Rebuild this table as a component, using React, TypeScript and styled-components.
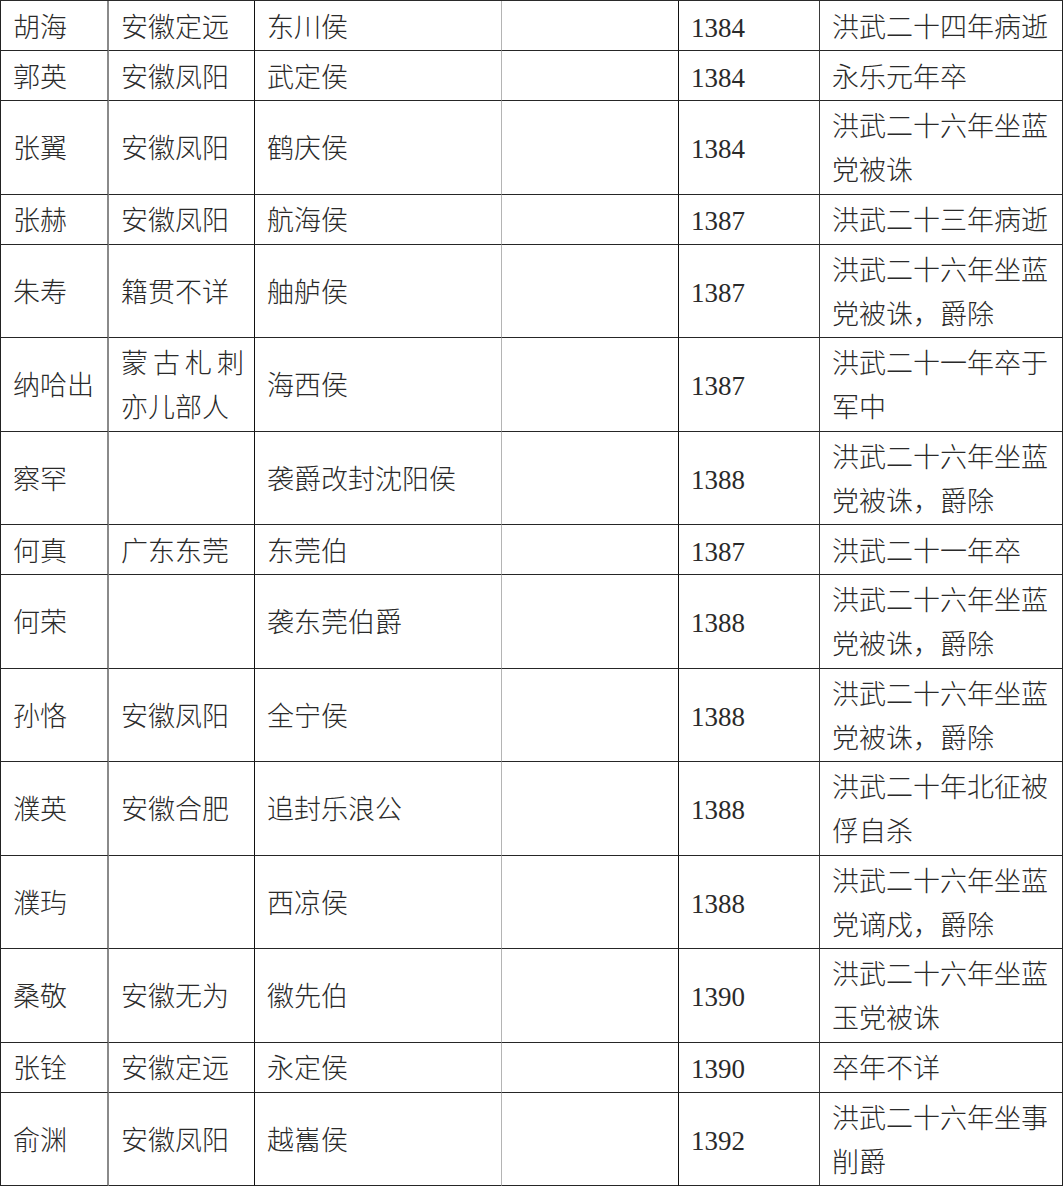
import React from "react";
import styled, { createGlobalStyle } from "styled-components";

const GlobalStyle = createGlobalStyle`
  html, body {
    margin: 0;
    padding: 0;
    background: #ffffff;
  }
  body {
    font-family: "Liberation Serif", "Noto Sans CJK SC", serif;
    color: #2a2a2a;
  }
`;

type Marquis = {
  name: string;
  origin: string;
  title: string;
  year: string;
  fate: string;
  tall?: boolean;
};

const rows: Marquis[] = [
  { name: "胡海", origin: "安徽定远", title: "东川侯", year: "1384", fate: "洪武二十四年病逝" },
  { name: "郭英", origin: "安徽凤阳", title: "武定侯", year: "1384", fate: "永乐元年卒" },
  { name: "张翼", origin: "安徽凤阳", title: "鹤庆侯", year: "1384", fate: "洪武二十六年坐蓝党被诛", tall: true },
  { name: "张赫", origin: "安徽凤阳", title: "航海侯", year: "1387", fate: "洪武二十三年病逝" },
  { name: "朱寿", origin: "籍贯不详", title: "舳舻侯", year: "1387", fate: "洪武二十六年坐蓝党被诛，爵除", tall: true },
  { name: "纳哈出", origin: "蒙古札刺亦儿部人", title: "海西侯", year: "1387", fate: "洪武二十一年卒于军中", tall: true },
  { name: "察罕", origin: "", title: "袭爵改封沈阳侯", year: "1388", fate: "洪武二十六年坐蓝党被诛，爵除", tall: true },
  { name: "何真", origin: "广东东莞", title: "东莞伯", year: "1387", fate: "洪武二十一年卒" },
  { name: "何荣", origin: "", title: "袭东莞伯爵", year: "1388", fate: "洪武二十六年坐蓝党被诛，爵除", tall: true },
  { name: "孙恪", origin: "安徽凤阳", title: "全宁侯", year: "1388", fate: "洪武二十六年坐蓝党被诛，爵除", tall: true },
  { name: "濮英", origin: "安徽合肥", title: "追封乐浪公", year: "1388", fate: "洪武二十年北征被俘自杀", tall: true },
  { name: "濮玙", origin: "", title: "西凉侯", year: "1388", fate: "洪武二十六年坐蓝党谪戍，爵除", tall: true },
  { name: "桑敬", origin: "安徽无为", title: "徽先伯", year: "1390", fate: "洪武二十六年坐蓝玉党被诛", tall: true },
  { name: "张铨", origin: "安徽定远", title: "永定侯", year: "1390", fate: "卒年不详" },
  { name: "俞渊", origin: "安徽凤阳", title: "越巂侯", year: "1392", fate: "洪武二十六年坐事削爵", tall: true },
];

const Table = styled.table`
  border-collapse: separate;
  border-spacing: 0;
  table-layout: fixed;
  width: 1063px;
  border-top: 1px solid #2a2a2a;
`;

const Row = styled.tr<{ $tall?: boolean }>`
  height: ${(p) => (p.$tall ? "93.5px" : "50px")};
`;

const Cell = styled.td<{ $width: number; $line: string; $lineWidth?: number; $first?: boolean; $justify?: boolean }>`
  box-sizing: border-box;
  width: ${(p) => p.$width}px;
  padding: 4px 10px 0 12px;
  border-bottom: 1px solid #262626;
  border-right: ${(p) => p.$lineWidth ?? 1}px solid ${(p) => p.$line};
  border-left: ${(p) => (p.$first ? "1px solid #222" : "none")};
  font-size: 27px;
  font-weight: 300;
  line-height: 44px;
  vertical-align: middle;
  text-align: ${(p) => (p.$justify ? "justify" : "left")};
  word-break: break-all;
`;

export default function App() {
  return (
    <>
      <GlobalStyle />
      <Table>
        <tbody>
          {rows.map((r) => (
            <Row key={r.name} $tall={r.tall}>
              <Cell $width={109} $line="#8a8a8a" $lineWidth={2} $first>
                {r.name}
              </Cell>
              <Cell $width={146} $line="#111" $justify>
                {r.origin}
              </Cell>
              <Cell $width={247} $line="#b4b4b4">
                {r.title}
              </Cell>
              <Cell $width={177} $line="#111" />
              <Cell $width={141} $line="#3a3a3a">
                {r.year}
              </Cell>
              <Cell $width={243} $line="#222">
                {r.fate}
              </Cell>
            </Row>
          ))}
        </tbody>
      </Table>
    </>
  );
}
